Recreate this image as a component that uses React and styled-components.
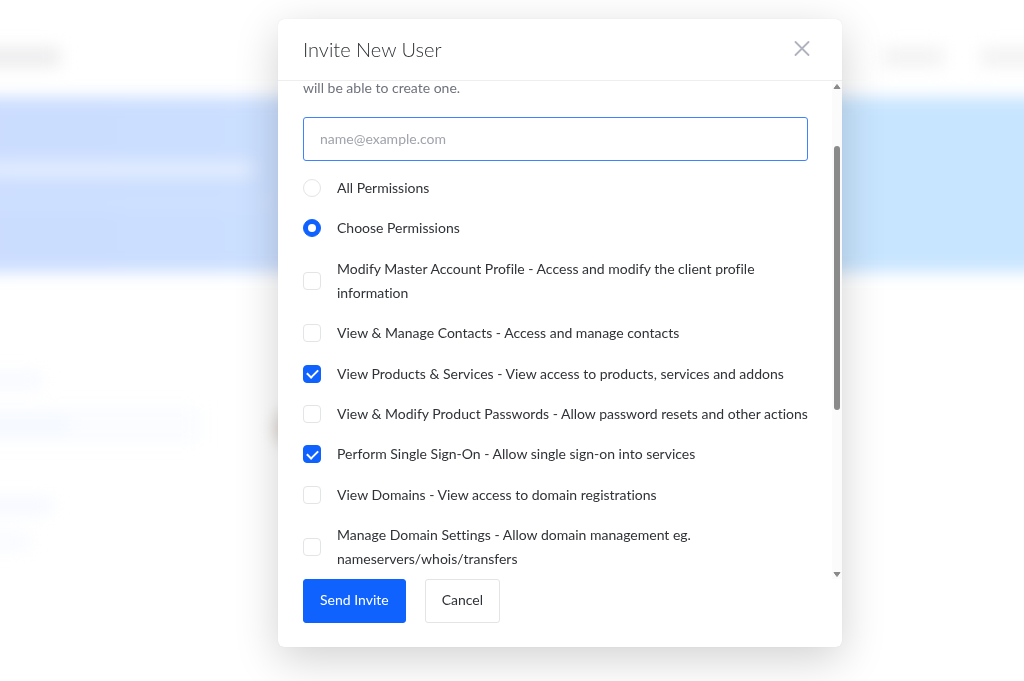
import React from "react";
import styled, { createGlobalStyle } from "styled-components";

const GlobalStyle = createGlobalStyle`
  * {
    box-sizing: border-box;
  }
  body {
    margin: 0;
    background: #ffffff;
    color: #2f3237;
    font-family: Lato, "Liberation Sans", sans-serif;
    font-size: 14px;
    line-height: 24px;
    font-variant-ligatures: none;
  }
`;

// page behind the modal
const Backdrop = styled.div`
  position: fixed;
  inset: 0;
  overflow: hidden;
`;

const Blurred = styled.div`
  margin: 0 -40px;
  filter: blur(8px);
`;

const TopBar = styled.div`
  height: 97px;
  display: flex;
  justify-content: space-between;
  align-items: flex-end;
  padding-bottom: 30px;
`;

const MenuGroup = styled.div`
  display: flex;
  gap: 36px;
`;

const Bar = styled.div`
  width: ${(props) => props.$width}px;
  height: ${(props) => props.$height || 16}px;
  background: ${(props) => props.$color || "#ececee"};
  border-radius: 4px;
`;

const Hero = styled.div`
  height: 175px;
  display: flex;
  flex-direction: column;
  gap: 20px;
  padding: 64px 0;
  background: linear-gradient(90deg, #cbdcff 0%, #cbdfff 30%, #c8e5ff 75%, #c8e5ff 100%);
`;

const Columns = styled.div`
  display: flex;
  gap: 76px;
  padding-top: 100px;
`;

const Sidebar = styled.div`
  width: 240px;
  display: flex;
  flex-direction: column;
  gap: 20px;
`;

const SideItem = styled.div`
  display: flex;
  align-items: center;
  height: ${(props) => (props.$active ? 34 : 16)}px;
  background: ${(props) => (props.$active ? "#fafcff" : "none")};
`;

const Avatar = styled.div`
  width: 30px;
  height: 36px;
  margin-top: 38px;
  border-radius: 50%;
  background: #d3ccc6;
`;

// modal
const Overlay = styled.div`
  position: relative;
  display: flex;
  justify-content: center;
  min-height: 100vh;
  padding: 19px 0 34px 96px;
`;

const Modal = styled.div`
  width: 100%;
  max-width: 564px;
  display: flex;
  flex-direction: column;
  background: #ffffff;
  border-radius: 6px;
  box-shadow: 0 0 1px rgba(0, 0, 0, 0.15), 0 12px 44px rgba(0, 0, 0, 0.18);
`;

const Header = styled.div`
  height: 62px;
  display: flex;
  align-items: center;
  justify-content: space-between;
  padding: 0 32px 2px 25px;
  border-bottom: 1px solid #eeeeef;
`;

const Title = styled.h2`
  margin: 0;
  font-size: 20px;
  font-weight: 300;
`;

const CloseButton = styled.button`
  display: flex;
  padding: 0;
  border: none;
  background: none;
  cursor: pointer;
`;

const Body = styled.div`
  flex: 1;
  display: flex;
`;

const Form = styled.form`
  flex: 1;
  display: flex;
  flex-direction: column;
  padding: 0 24px 8px 25px;
`;

const Intro = styled.p`
  margin: 0 0 22px;
  line-height: 14px;
  color: #6e727c;
`;

const EmailInput = styled.input`
  width: 100%;
  height: 44px;
  margin-bottom: 15px;
  padding: 0 16px 2px;
  border: 1px solid #3f82ff;
  border-radius: 3px;
  outline: none;
  color: inherit;
  font: inherit;
  &::placeholder {
    color: #a0a3ab;
    opacity: 1;
  }
`;

const Options = styled.div`
  flex: 1;
  display: flex;
  flex-direction: column;
  justify-content: space-between;
  margin-right: -8px;
`;

const Option = styled.label`
  display: flex;
  align-items: center;
  gap: 16px;
  cursor: pointer;
`;

const Choice = styled.input`
  appearance: none;
  flex: none;
  display: grid;
  place-items: center;
  width: 18px;
  height: 18px;
  margin: 0;
  border: 1px solid #e3e4e6;
  border-radius: 4px;
  background: #ffffff;
  &:checked {
    border-color: #0f62fe;
    background: #0f62fe;
  }
`;

const Radio = styled(Choice).attrs({ type: "radio" })`
  border-radius: 50%;
  &:checked::after {
    content: "";
    width: 8px;
    height: 8px;
    border-radius: 50%;
    background: #ffffff;
  }
`;

const Checkbox = styled(Choice).attrs({ type: "checkbox" })`
  &:checked::after {
    content: "";
    width: 9px;
    height: 5px;
    margin-bottom: 2px;
    border: solid #ffffff;
    border-width: 0 0 2px 2px;
    transform: rotate(-45deg);
  }
`;

const Scrollbar = styled.div`
  width: 10px;
  display: flex;
  flex-direction: column;
  align-items: center;
  padding: 3px 0 2px;
  background: #fbfbfb;
`;

const Track = styled.div`
  flex: 1;
  padding-top: 57px;
`;

const Thumb = styled.div`
  width: 6px;
  height: 62%;
  border-radius: 3px;
  background: #8a8a8a;
`;

const Footer = styled.div`
  display: flex;
  gap: 19px;
  padding: 0 25px 24px;
`;

const Button = styled.button`
  height: 44px;
  padding: 0 16px 2px;
  border: 1px solid ${(props) => (props.$primary ? "#0f62fe" : "#e3e4e6")};
  border-radius: 3px;
  background: ${(props) => (props.$primary ? "#0f62fe" : "#ffffff")};
  color: ${(props) => (props.$primary ? "#ffffff" : "#2f3237")};
  font: inherit;
  cursor: pointer;
`;

const permissions = [
  { name: "profile", label: "Modify Master Account Profile - Access and modify the client profile information" },
  { name: "contacts", label: "View & Manage Contacts - Access and manage contacts" },
  { name: "products", label: "View Products & Services - View access to products, services and addons", checked: true },
  { name: "passwords", label: "View & Modify Product Passwords - Allow password resets and other actions" },
  { name: "sso", label: "Perform Single Sign-On - Allow single sign-on into services", checked: true },
  { name: "domains", label: "View Domains - View access to domain registrations" },
  { name: "managedomains", label: "Manage Domain Settings - Allow domain management eg. nameservers/whois/transfers" },
];

const PageBehind = () => {
  return (
    <Backdrop aria-hidden="true">
      <Blurred>
        <TopBar>
          <Bar $width={100} $height={20} $color="#ededef" />
          <MenuGroup>
            <Bar $width={62} $height={20} $color="#f3f3f3" />
            <Bar $width={84} $height={20} $color="#f3f3f3" />
          </MenuGroup>
        </TopBar>
        <Hero>
          <Bar $width={294} $height={24} $color="#e3edff" />
          <Bar $width={310} $height={14} $color="#d0e2ff" />
        </Hero>
        <Columns>
          <Sidebar>
            <SideItem>
              <Bar $width={82} $color="#f7f9ff" />
            </SideItem>
            <SideItem $active>
              <Bar $width={110} $color="#f4f8ff" />
            </SideItem>
            <SideItem />
            <SideItem>
              <Bar $width={92} $color="#f5f8ff" />
            </SideItem>
            <SideItem>
              <Bar $width={70} $color="#f8faff" />
            </SideItem>
          </Sidebar>
          <Avatar />
        </Columns>
      </Blurred>
    </Backdrop>
  );
};

const ScrollArrow = ({ down }) => {
  return (
    <svg width="8" height="5" viewBox="0 0 8 5">
      <path
        d={down ? "M1 0.5h6L4 4.5z" : "M1 4.5h6L4 0.5z"}
        fill="#8a8a8a"
        stroke="#8a8a8a"
        strokeLinejoin="round"
      />
    </svg>
  );
};

const App = () => {
  return (
    <>
      <GlobalStyle />
      <PageBehind />
      <Overlay>
        <Modal role="dialog" aria-labelledby="invite-title">
          <Header>
            <Title id="invite-title">Invite New User</Title>
            <CloseButton type="button" aria-label="Close">
              <svg width="16" height="16" viewBox="0 0 16 16">
                <path
                  d="M1.5 1l13 13M14.5 1l-13 13"
                  stroke="#b1b2bf"
                  strokeWidth="1.8"
                  strokeLinecap="round"
                />
              </svg>
            </CloseButton>
          </Header>
          <Body>
            <Form id="invite-form">
              <Intro>will be able to create one.</Intro>
              <EmailInput type="email" placeholder="name@example.com" aria-label="Email address" />
              <Options>
                <Option>
                  <Radio name="permissions" value="all" />
                  All Permissions
                </Option>
                <Option>
                  <Radio name="permissions" value="choose" defaultChecked />
                  Choose Permissions
                </Option>
                {permissions.map((item) => (
                  <Option key={item.name}>
                    <Checkbox name={item.name} defaultChecked={item.checked} />
                    {item.label}
                  </Option>
                ))}
              </Options>
            </Form>
            <Scrollbar>
              <ScrollArrow />
              <Track>
                <Thumb />
              </Track>
              <ScrollArrow down />
            </Scrollbar>
          </Body>
          <Footer>
            <Button type="submit" form="invite-form" $primary>
              Send Invite
            </Button>
            <Button type="button">Cancel</Button>
          </Footer>
        </Modal>
      </Overlay>
    </>
  );
};

export default App;
